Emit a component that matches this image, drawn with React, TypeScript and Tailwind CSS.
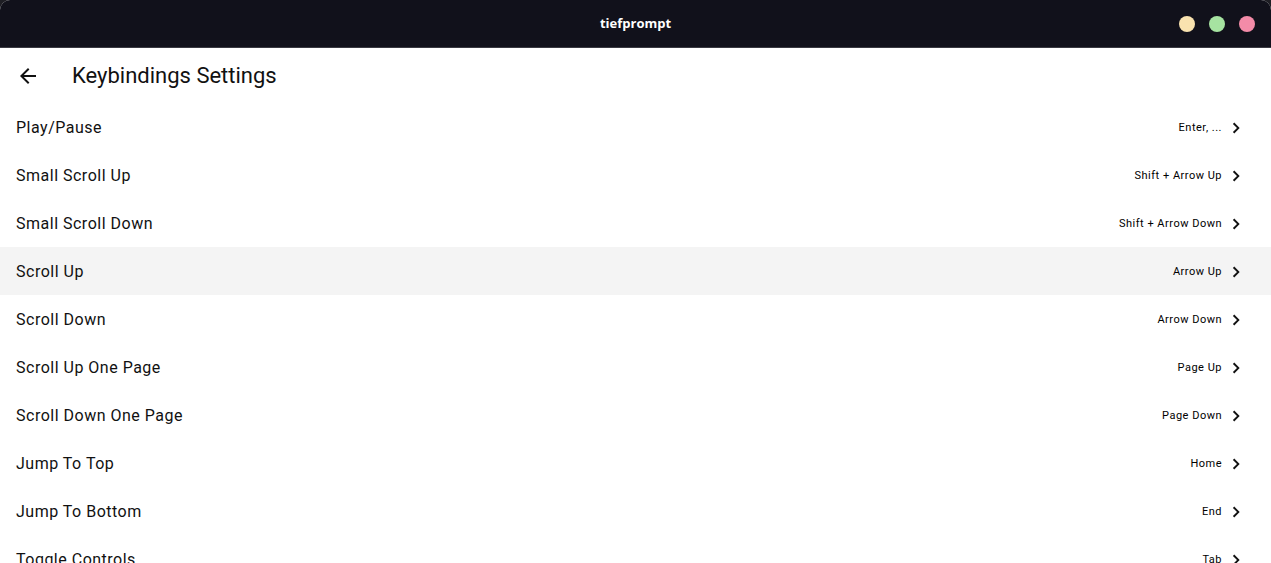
import React from 'react';

const bindings: Array<{ label: string; keys: string; hovered?: boolean }> = [
  { label: 'Play/Pause', keys: 'Enter, ...' },
  { label: 'Small Scroll Up', keys: 'Shift + Arrow Up' },
  { label: 'Small Scroll Down', keys: 'Shift + Arrow Down' },
  { label: 'Scroll Up', keys: 'Arrow Up', hovered: true },
  { label: 'Scroll Down', keys: 'Arrow Down' },
  { label: 'Scroll Up One Page', keys: 'Page Up' },
  { label: 'Scroll Down One Page', keys: 'Page Down' },
  { label: 'Jump To Top', keys: 'Home' },
  { label: 'Jump To Bottom', keys: 'End' },
  { label: 'Toggle Controls', keys: 'Tab' },
];

const ChevronRight = () => (
  <svg className="w-[20px] h-[20px] ml-[4px]" viewBox="0 0 24 24" fill="currentColor">
    <path d="M8.3 16.9 13.2 12 8.3 7.1 9.9 5.5l6.5 6.5-6.5 6.5z" />
  </svg>
);

const ArrowBack = () => (
  <svg className="w-6 h-6" viewBox="0 0 24 24" fill="currentColor">
    <path d="M20 11H7.83l5.59-5.59L12 4l-8 8 8 8 1.41-1.41L7.83 13H20v-2z" />
  </svg>
);

export default function App() {
  return (
    <div className="w-[1271px] h-[563px] bg-[#1e1e24] overflow-hidden">
      <div className="h-full flex flex-col rounded-t-[10px] overflow-hidden bg-white">
        {/* Window title bar */}
        <div className="h-[48px] shrink-0 bg-[#11111b] border-b border-[#3a3a42] relative flex items-center justify-center">
          <span className="text-white text-[13px] font-bold font-['Open_Sans',sans-serif]">
            tiefprompt
          </span>
          <div className="absolute right-[16px] top-0 h-full flex items-center gap-[14px]">
            <div className="w-4 h-4 rounded-full bg-[#f9e2af]" />
            <div className="w-4 h-4 rounded-full bg-[#a6e3a1]" />
            <div className="w-4 h-4 rounded-full bg-[#f38ba8]" />
          </div>
        </div>

        {/* App bar */}
        <div className="h-[55px] shrink-0 flex items-center px-4 text-[#111111] font-['Roboto',sans-serif]">
          <ArrowBack />
          <h1 className="ml-8 text-[22px] leading-none">Keybindings Settings</h1>
        </div>

        {/* Bindings list */}
        <div className="flex-1 overflow-hidden font-['Roboto',sans-serif] text-[#111111]">
          {bindings.map((b) => (
            <div
              key={b.label}
              className={`h-12 pt-[1px] flex items-center justify-between pl-4 pr-[25px] ${b.hovered ? 'bg-[#f4f4f4]' : ''}`}
            >
              <span className="text-[16px] tracking-[0.5px]">{b.label}</span>
              <div className="flex items-center">
                <span className="mt-[2px] text-[11px] text-black tracking-[0.5px]">{b.keys}</span>
                <ChevronRight />
              </div>
            </div>
          ))}
        </div>
      </div>
    </div>
  );
}
